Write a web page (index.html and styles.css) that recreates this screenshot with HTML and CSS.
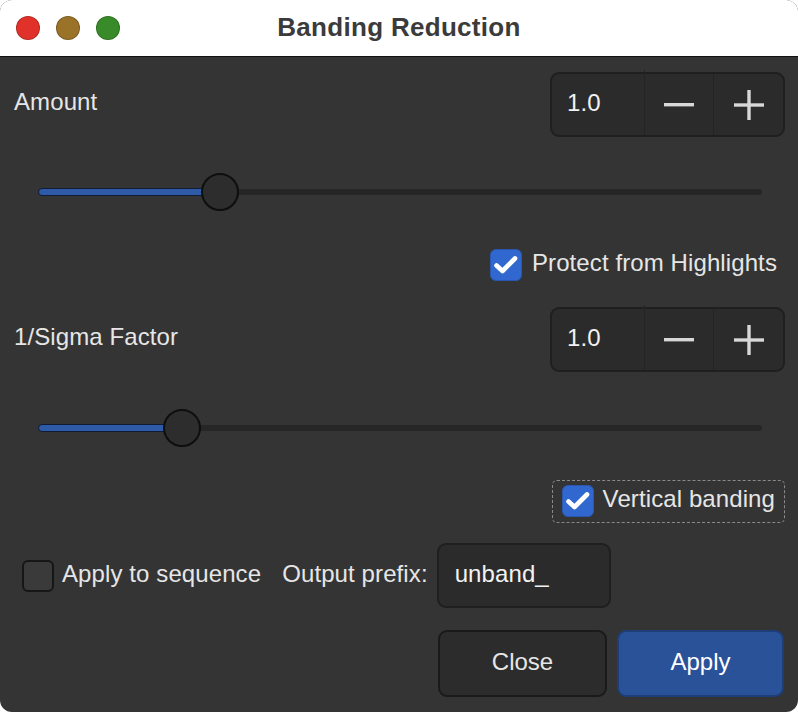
FILE: index.html
```html
<!DOCTYPE html>
<html lang="en">
<head>
    <meta charset="UTF-8">
    <title>Banding Reduction</title>
    <link rel="stylesheet" href="styles.css">
</head>
<body>
    <div class="window">
        <div class="titlebar">
            <div class="lights">
                <span class="light red"></span>
                <span class="light yellow"></span>
                <span class="light green"></span>
            </div>
            <div class="title">Banding Reduction</div>
        </div>

        <div class="content">
            <div class="row spin-row">
                <span class="label">Amount</span>
                <div class="spin">
                    <span class="spin-value">1.0</span>
                    <span class="spin-btn">
                        <svg width="32" height="6" viewBox="0 0 32 6"><rect x="1" y="1" width="30" height="3.4" fill="#d8d8d8"/></svg>
                    </span>
                    <span class="spin-btn">
                        <svg width="32" height="32" viewBox="0 0 32 32"><rect x="1" y="14.3" width="30" height="3.4" fill="#d8d8d8"/><rect x="14.3" y="1" width="3.4" height="30" fill="#d8d8d8"/></svg>
                    </span>
                </div>
            </div>

            <div class="slider-row first">
                <div class="slider">
                    <div class="track"></div>
                    <div class="fill" style="width: 182px"></div>
                    <div class="handle" style="left: 182px"></div>
                </div>
            </div>

            <div class="row check-row">
                <label class="check">
                    <span class="box checked">
                        <svg width="24" height="20" viewBox="0 0 24 20"><path d="M2.5 10.5 L8.5 16 L21 3.5" fill="none" stroke="#fff" stroke-width="4.6" stroke-linecap="round" stroke-linejoin="round"/></svg>
                    </span>
                    <span>Protect from Highlights</span>
                </label>
            </div>

            <div class="row spin-row second">
                <span class="label">1/Sigma Factor</span>
                <div class="spin">
                    <span class="spin-value">1.0</span>
                    <span class="spin-btn">
                        <svg width="32" height="6" viewBox="0 0 32 6"><rect x="1" y="1" width="30" height="3.4" fill="#d8d8d8"/></svg>
                    </span>
                    <span class="spin-btn">
                        <svg width="32" height="32" viewBox="0 0 32 32"><rect x="1" y="14.3" width="30" height="3.4" fill="#d8d8d8"/><rect x="14.3" y="1" width="3.4" height="30" fill="#d8d8d8"/></svg>
                    </span>
                </div>
            </div>

            <div class="slider-row second">
                <div class="slider">
                    <div class="track"></div>
                    <div class="fill" style="width: 144px"></div>
                    <div class="handle" style="left: 144px"></div>
                </div>
            </div>

            <div class="row check-row focus-row">
                <label class="check focused">
                    <span class="box checked">
                        <svg width="24" height="20" viewBox="0 0 24 20"><path d="M2.5 10.5 L8.5 16 L21 3.5" fill="none" stroke="#fff" stroke-width="4.6" stroke-linecap="round" stroke-linejoin="round"/></svg>
                    </span>
                    <span>Vertical banding</span>
                </label>
            </div>

            <div class="row seq-row">
                <label class="check seq-check">
                    <span class="box"></span>
                    <span>Apply to sequence</span>
                </label>
                <span class="prefix-label">Output prefix:</span>
                <div class="entry">unband_</div>
            </div>

            <div class="row buttons">
                <button class="btn">Close</button>
                <button class="btn primary">Apply</button>
            </div>
        </div>
    </div>
</body>
</html>
```

FILE: styles.css
```css
html, body {
    margin: 0;
    padding: 0;
    background: #ffffff;
}
body {
    font-family: "Liberation Sans", Arial, sans-serif;
    width: 798px;
    height: 712px;
    overflow: hidden;
}
.window {
    width: 798px;
    height: 712px;
    box-sizing: border-box;
    background: #343434;
    border-radius: 12px;
    overflow: hidden;
    color: #e6e6e6;
    font-size: 24px;
    letter-spacing: 0.1px;
    display: flex;
    flex-direction: column;
}
.titlebar {
    height: 56px;
    flex: none;
    background: #ffffff;
    border-bottom: 1px solid #121212;
    position: relative;
    display: flex;
    align-items: center;
    justify-content: center;
}
.lights {
    position: absolute;
    left: 16px;
    top: 16px;
    display: flex;
    gap: 16px;
}
.light {
    width: 22px;
    height: 22px;
    border-radius: 50%;
    border: 1px solid rgba(0,0,0,0.2);
}
.red { background: #e0322a; }
.yellow { background: #9a7228; }
.green { background: #398b29; }
.title {
    font-weight: bold;
    font-size: 26px;
    letter-spacing: 0.3px;
    color: #3b3b3b;
    margin-top: -2px;
}
.content {
    padding: 15px 13px 0 14px;
    display: flex;
    flex-direction: column;
}
.row {
    display: flex;
    align-items: center;
}
.spin-row {
    height: 65px;
    justify-content: space-between;
}
.spin-row.second {
    margin-top: 24px;
}
.label {
    margin-top: -6px;
}
.spin {
    display: flex;
    height: 65px;
    box-sizing: border-box;
    width: 235px;
    background: #2b2b2b;
    border: 2px solid #1f1f1f;
    border-radius: 9px;
}
.spin-value {
    width: 94px;
    padding-left: 15px;
    box-sizing: border-box;
    display: flex;
    align-items: center;
    margin-top: -4px;
    color: #f2f2f2;
    border-right: 1px solid #242424;
}
.spin-btn {
    width: 70px;
    display: flex;
    align-items: center;
    justify-content: center;
}
.spin-btn + .spin-btn {
    border-left: 1px solid #242424;
}
.slider-row {
    height: 110px;
    display: flex;
    align-items: center;
    padding: 0 23px 0 24px;
}
.slider-row.second {
    height: 108px;
    padding-top: 4px;
    box-sizing: border-box;
}
.slider {
    position: relative;
    flex: 1;
    height: 40px;
}
.track {
    position: absolute;
    left: 0;
    right: 0;
    top: 17px;
    height: 6px;
    background: #262626;
    border-radius: 3px;
}
.fill {
    position: absolute;
    left: 0;
    top: 16px;
    height: 6px;
    background: #2e5aa8;
    border: 1px solid #0f1c33;
    border-radius: 4px;
}
.handle {
    position: absolute;
    top: 1px;
    width: 38px;
    height: 38px;
    margin-left: -19px;
    box-sizing: border-box;
    border-radius: 50%;
    background: #2d2d2d;
    border: 2px solid #0e0e0e;
}
.check-row {
    height: 36px;
    justify-content: flex-end;
    padding-right: 8px;
}
.check {
    display: flex;
    align-items: center;
    gap: 10px;
}
.box {
    width: 32px;
    height: 32px;
    box-sizing: border-box;
    border-radius: 6px;
    background: #3a3a3a;
    border: 2px solid #161616;
    display: flex;
    align-items: center;
    justify-content: center;
}
.box.checked {
    background: #3168cf;
    border: 1px solid #2a58b0;
}
.check span:last-child {
    margin-top: -4px;
}
.focus-row {
    height: 42px;
    padding-right: 0;
}
.focused {
    height: 43px;
    box-sizing: border-box;
    padding: 0 9px 0 9px;
    border: 1px dashed #8a8a8a;
    border-radius: 5px;
    gap: 9px;
}
.seq-row {
    margin-top: 21px;
    height: 65px;
    padding-left: 8px;
}
.seq-check {
    gap: 8px;
}
.prefix-label {
    margin-left: 21px;
    margin-top: -4px;
}
.entry {
    margin-left: 9px;
    width: 174px;
    height: 65px;
    box-sizing: border-box;
    background: #2b2b2b;
    border: 2px solid #1f1f1f;
    border-radius: 9px;
    padding: 0 0 4px 16px;
    display: flex;
    align-items: center;
    color: #f2f2f2;
}
.buttons {
    margin-top: 22px;
    height: 67px;
    justify-content: flex-end;
    gap: 10px;
    padding-right: 1px;
}
.btn {
    font-family: "Liberation Sans", Arial, sans-serif;
    font-size: 24px;
    height: 67px;
    width: 169px;
    box-sizing: border-box;
    border-radius: 9px;
    background: #2c2c2c;
    border: 2px solid #1a1a1a;
    color: #e6e6e6;
    padding-bottom: 4px;
}
.btn.primary {
    width: 167px;
    background: #2a5298;
    border-color: #1e3e77;
    color: #ffffff;
}
```
